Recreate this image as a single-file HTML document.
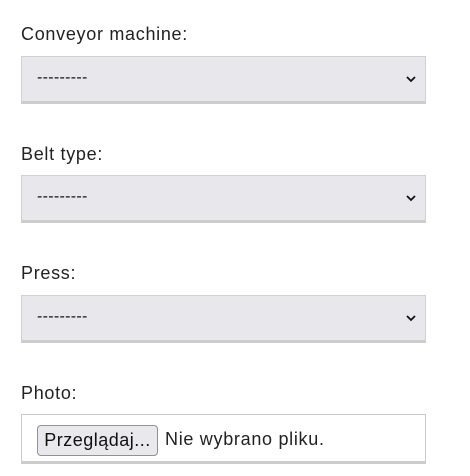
<!DOCTYPE html>
<html><head><style>
body{margin:0;background:#fff;font-family:"Liberation Sans",Arial,sans-serif;color:#222;width:470px;height:476px;position:relative;overflow:hidden}
.l{position:absolute;left:21px;font-size:18px;letter-spacing:0.7px;line-height:20px}
.s{position:absolute;left:21px;width:403px;height:44px;background:#e8e7ec;border:1px solid #d0d0d4;border-bottom:3px solid #cccccc;box-sizing:content-box}
.s span{position:absolute;left:15px;top:12px;font-size:16px;letter-spacing:0.3px;color:#111}
.s svg{position:absolute;right:8px;top:17px;overflow:visible}
.f{position:absolute;left:21px;top:414px;width:405px;height:50px;background:#fff;border:1px solid #ccc;border-bottom:3px solid #ccc;box-sizing:border-box}
.b{position:absolute;left:15px;top:10px;width:121px;height:31px;box-sizing:border-box;background:#e9e9ed;border:1px solid #8f8f9d;border-radius:4px;font-size:18px;letter-spacing:0.5px;line-height:29px;text-align:center;color:#111;white-space:nowrap}
.n{position:absolute;left:143px;top:14px;font-size:18px;letter-spacing:0.7px;color:#222}
</style></head><body>
<div class="l" style="top:24px">Conveyor machine:</div>
<div class="s" style="top:56px"><span>---------</span><svg width="12" height="10" viewBox="0 0 12 10"><path d="M2 3l4 4 4-4" stroke="#111" stroke-width="1.8" fill="none"/></svg></div>
<div class="l" style="top:144px">Belt type:</div>
<div class="s" style="top:175px"><span>---------</span><svg width="12" height="10" viewBox="0 0 12 10"><path d="M2 3l4 4 4-4" stroke="#111" stroke-width="1.8" fill="none"/></svg></div>
<div class="l" style="top:263px">Press:</div>
<div class="s" style="top:295px"><span>---------</span><svg width="12" height="10" viewBox="0 0 12 10"><path d="M2 3l4 4 4-4" stroke="#111" stroke-width="1.8" fill="none"/></svg></div>
<div class="l" style="top:383px">Photo:</div>
<div class="f"><div class="b">Przeglądaj...</div><div class="n">Nie wybrano pliku.</div></div>
</body></html>
